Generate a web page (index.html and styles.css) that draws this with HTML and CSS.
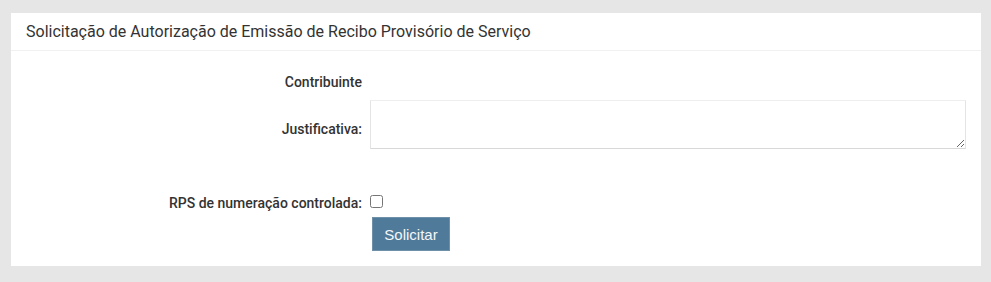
FILE: index.html
```html
<!DOCTYPE html>
<html lang="pt-BR">
<head>
<meta charset="utf-8">
<title>Solicitação de Autorização</title>
<link rel="stylesheet" href="styles.css">
</head>
<body>
<div class="panel">
  <div class="panel-heading">Solicitação de Autorização de Emissão de Recibo Provisório de Serviço</div>
  <form class="panel-body">
    <div class="row row-contrib">
      <label class="label">Contribuinte</label>
      <div class="field"></div>
    </div>
    <div class="row row-just">
      <label class="label label-just" for="just">Justificativa:</label>
      <div class="field"><textarea id="just" class="textarea"></textarea></div>
    </div>
    <div class="row row-rps">
      <label class="label" for="rps">RPS de numeração controlada:</label>
      <div class="field"><input type="checkbox" id="rps" class="check"></div>
    </div>
    <div class="row row-btn">
      <div class="label"></div>
      <div class="field"><button type="button" class="btn">Solicitar</button></div>
    </div>
  </form>
</div>
</body>
</html>
```

FILE: styles.css
```css
html, body {
  margin: 0;
  padding: 0;
}
body {
  background: #e6e6e6;
  font-family: Roboto, "Liberation Sans", Arial, sans-serif;
  color: #333;
  padding: 13px 10px 16px 11px;
  width: 970px;
}
.panel {
  background: #fff;
  width: 970px;
  height: 253px;
  box-sizing: border-box;
}
.panel-heading {
  height: 37px;
  border-bottom: 1px solid #f1f1f1;
  padding-left: 15px;
  font-size: 16px;
  line-height: 37px;
  color: #333;
}
.panel-body {
  margin: 0;
  padding: 21px 15px 0 0;
  display: flex;
  flex-direction: column;
}
.row {
  display: grid;
  grid-template-columns: 351px 596px;
  column-gap: 8px;
}
.label {
  text-align: right;
  font-size: 14px;
  font-weight: 500;
  line-height: 20px;
  color: #333;
}
.row-just {
  margin-top: 8px;
}
.label-just {
  padding-top: 19px;
}
.textarea {
  display: block;
  box-sizing: border-box;
  width: 596px;
  height: 49px;
  margin: 0;
  border: 1px solid #e4e4e4;
  border-bottom-color: #d8d8d8;
  border-top-color: #eeeeee;
  font-family: inherit;
  font-size: 14px;
}
.row-rps {
  margin-top: 44px;
}
.check {
  display: block;
  width: 13px;
  height: 13px;
  margin: 2px 0 0 0;
}
.row-btn {
  margin-top: 4px;
}
.btn {
  display: block;
  margin: 0 0 0 2px;
  width: 78px;
  height: 34px;
  background: #4f7a9a;
  border: 1px solid #6f90a9;
  color: #f4f7fa;
  font-family: "Liberation Sans", Arial, sans-serif;
  font-size: 15px;
  padding: 0;
}
```
